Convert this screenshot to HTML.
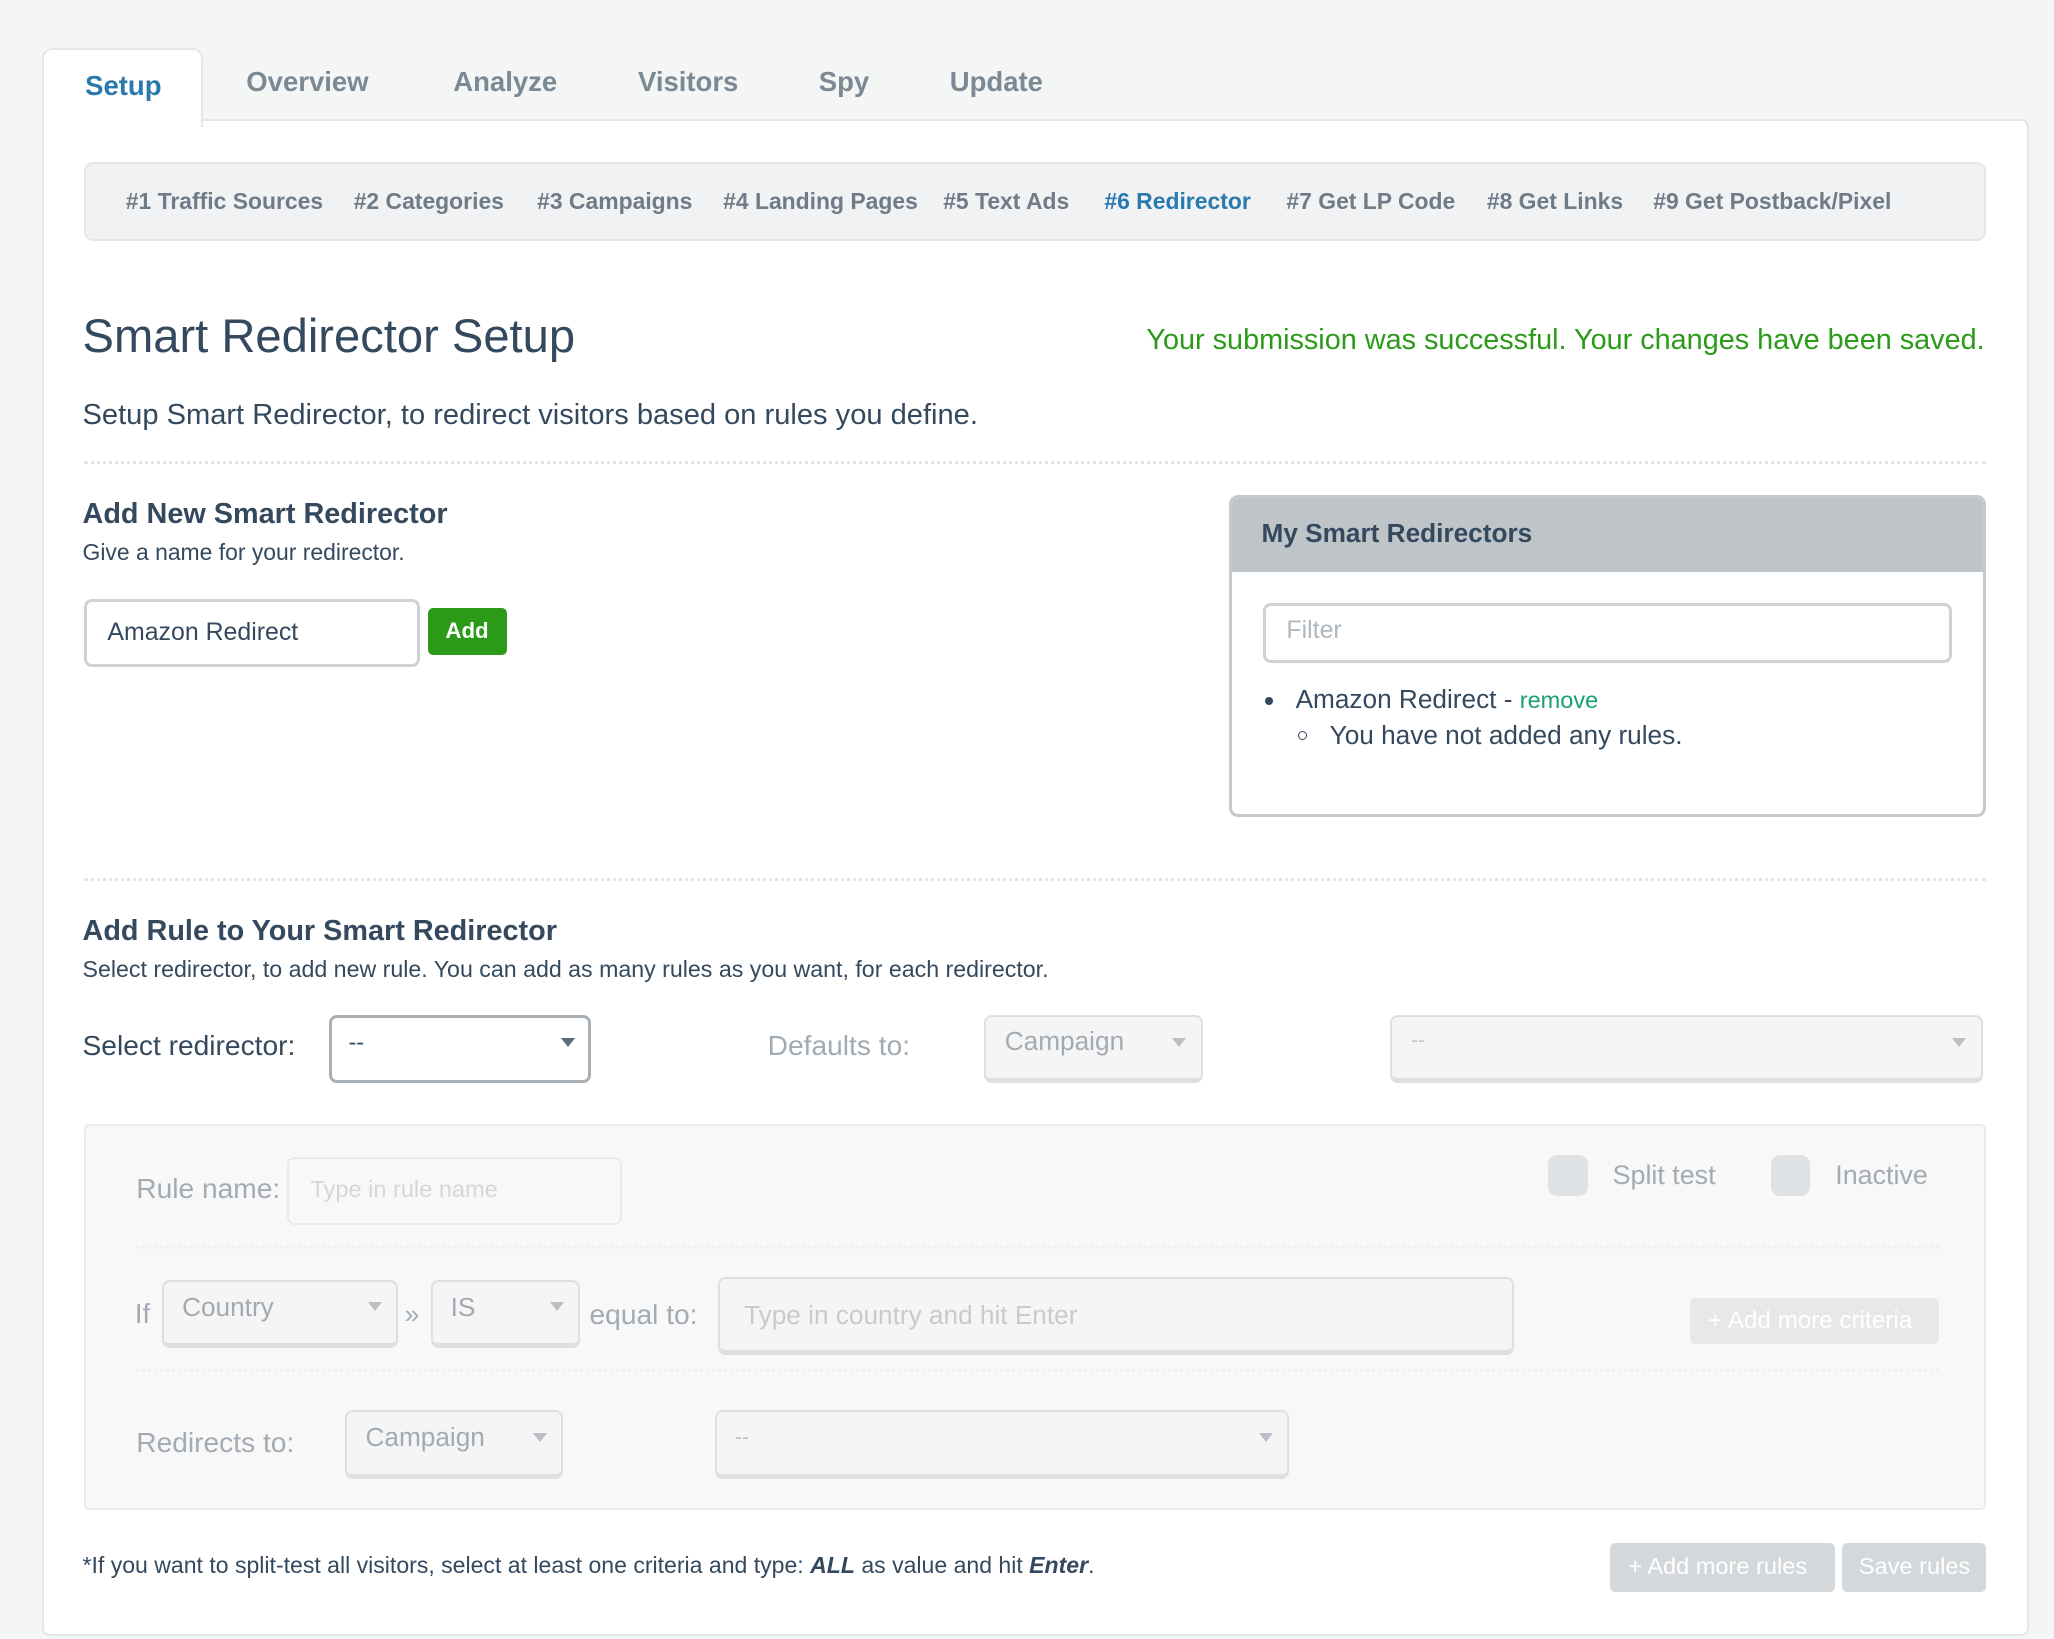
<!DOCTYPE html>
<html><head><meta charset="utf-8"><style>
html,body{margin:0;padding:0;background:#f4f5f5;overflow:hidden}
#w{position:relative;width:1568px;height:1251px;zoom:1.31;font-family:"Liberation Sans",sans-serif;color:#34495e}
.a{position:absolute;white-space:nowrap;line-height:1}
.box{position:absolute;box-sizing:border-box}
.tab{font-weight:bold;font-size:21px;color:#7b8995}
.sub{font-weight:bold;font-size:17.5px;color:#6f7c88;top:145px}
.g{color:#a2abb3}
.sel{position:absolute;box-sizing:border-box;background:#f5f5f5;border:2px solid #dde0e3;border-bottom-width:4px;border-radius:6px}
.arr{position:absolute;width:0;height:0;border-left:6px solid transparent;border-right:6px solid transparent;border-top:7px solid #b9bfc4}
.dot{position:absolute;left:64px;width:1452px;border-top:3px dotted #e3e5e7}
</style></head><body><div id="w">
<div class="box" style="left:32px;top:91px;width:1517px;height:1158px;background:#fff;border:2px solid #e4e6e8;border-radius:6px"></div>
<div class="box" style="left:32px;top:37px;width:123px;height:60px;background:#fff;border:2px solid #e4e6e8;border-bottom:none;border-radius:8px 8px 0 0"></div>
<div class="a" style="left:65px;top:55px;font-size:21px;font-weight:bold;color:#2a7aae">Setup</div>
<div class="a tab" style="left:188px;top:52px">Overview</div>
<div class="a tab" style="left:346px;top:52px">Analyze</div>
<div class="a tab" style="left:487px;top:52px">Visitors</div>
<div class="a tab" style="left:625px;top:52px">Spy</div>
<div class="a tab" style="left:725px;top:52px">Update</div>
<div class="box" style="left:64px;top:124px;width:1452px;height:60px;background:#f1f2f4;border:2px solid #e4e6e8;border-radius:7px"></div>
<div class="a sub" style="left:96px">#1 Traffic Sources</div>
<div class="a sub" style="left:270px">#2 Categories</div>
<div class="a sub" style="left:410px">#3 Campaigns</div>
<div class="a sub" style="left:552px">#4 Landing Pages</div>
<div class="a sub" style="left:720px">#5 Text Ads</div>
<div class="a sub" style="left:843px;color:#2a7aae">#6 Redirector</div>
<div class="a sub" style="left:982px">#7 Get LP Code</div>
<div class="a sub" style="left:1135px">#8 Get Links</div>
<div class="a sub" style="left:1262px">#9 Get Postback/Pixel</div>
<div class="a" style="left:63px;top:238px;font-size:36px">Smart Redirector Setup</div>
<div class="a" style="right:53px;top:249px;font-size:22px;color:#2a9a18">Your submission was successful. Your changes have been saved.</div>
<div class="a" style="left:63px;top:306px;font-size:22.2px">Setup Smart Redirector, to redirect visitors based on rules you define.</div>
<div class="dot" style="top:352px"></div>
<div class="a" style="left:63px;top:382px;font-size:22px;font-weight:bold">Add New Smart Redirector</div>
<div class="a" style="left:63px;top:413px;font-size:17.5px">Give a name for your redirector.</div>
<div class="box" style="left:64px;top:457px;width:257px;height:52px;border:3px solid #cfd3d7;border-radius:6px"></div>
<div class="a" style="left:82px;top:473px;font-size:19px">Amazon Redirect</div>
<div class="box" style="left:327px;top:464px;width:60px;height:36px;background:#2a9a18;border-radius:4px"></div>
<div class="a" style="left:340px;top:473px;font-size:17px;font-weight:bold;color:#fff">Add</div>
<div class="box" style="left:938px;top:378px;width:578px;height:246px;border:3px solid #c4c9cd;border-radius:7px;background:#fff;overflow:hidden"><div style="height:56px;background:#bfc4c8"></div></div>
<div class="a" style="left:963px;top:397px;font-size:20px;font-weight:bold">My Smart Redirectors</div>
<div class="box" style="left:964px;top:460px;width:526px;height:46px;border:3px solid #cfd3d7;border-radius:6px"></div>
<div class="a" style="left:982px;top:472px;font-size:19px;color:#b0b7bd">Filter</div>
<div class="box" style="left:966px;top:532px;width:6px;height:6px;border-radius:50%;background:#34495e"></div>
<div class="a" style="left:989px;top:524px;font-size:20px">Amazon Redirect - <span style="color:#1a9e74;font-size:18px">remove</span></div>
<div class="box" style="left:991px;top:558px;width:7px;height:7px;border-radius:50%;border:1.5px solid #34495e"></div>
<div class="a" style="left:1015px;top:551px;font-size:20px">You have not added any rules.</div>
<div class="dot" style="top:670px"></div>
<div class="a" style="left:63px;top:700px;font-size:22px;font-weight:bold">Add Rule to Your Smart Redirector</div>
<div class="a" style="left:63px;top:731px;font-size:17.7px">Select redirector, to add new rule. You can add as many rules as you want, for each redirector.</div>
<div class="a" style="left:63px;top:788px;font-size:21.5px">Select redirector:</div>
<div class="box" style="left:251px;top:775px;width:200px;height:52px;border:3px solid #a8afb5;border-radius:6px;background:#fff"></div>
<div class="a" style="left:266px;top:787px;font-size:18px">--</div>
<div class="arr" style="left:428px;top:792px;border-top-color:#5d6a75"></div>
<div class="a g" style="left:586px;top:788px;font-size:21.5px">Defaults to:</div>
<div class="sel" style="left:751px;top:775px;width:167px;height:52px"></div>
<div class="a g" style="left:767px;top:785px;font-size:20px">Campaign</div>
<div class="arr" style="left:895px;top:792px"></div>
<div class="sel" style="left:1061px;top:775px;width:453px;height:52px"></div>
<div class="a" style="left:1077px;top:787px;font-size:16px;color:#c6cbd0">--</div>
<div class="arr" style="left:1490px;top:792px"></div>
<div class="box" style="left:64px;top:858px;width:1452px;height:295px;background:#f8f8f8;border:2px solid #eaebec;border-radius:4px"></div>
<div class="a g" style="left:104px;top:897px;font-size:21.5px">Rule name:</div>
<div class="box" style="left:219px;top:883px;width:256px;height:52px;border:2px solid #e8eaec;border-radius:6px;background:#f8f8f8"></div>
<div class="a" style="left:237px;top:899px;font-size:18px;color:#d3d7db">Type in rule name</div>
<div class="box" style="left:1182px;top:882px;width:30px;height:31px;background:#dfe2e5;border-radius:7px"></div>
<div class="a g" style="left:1231px;top:887px;font-size:20.5px">Split test</div>
<div class="box" style="left:1352px;top:882px;width:30px;height:31px;background:#dfe2e5;border-radius:7px"></div>
<div class="a g" style="left:1401px;top:887px;font-size:20.5px">Inactive</div>
<div class="dot" style="left:104px;width:1376px;top:951px;border-top-color:#eef0f1"></div>
<div class="a g" style="left:103px;top:992px;font-size:21px">If</div>
<div class="sel" style="left:124px;top:977px;width:180px;height:52px"></div>
<div class="a g" style="left:139px;top:988px;font-size:20px">Country</div>
<div class="arr" style="left:281px;top:994px"></div>
<div class="a g" style="left:309px;top:993px;font-size:20px">»</div>
<div class="sel" style="left:329px;top:977px;width:114px;height:52px"></div>
<div class="a g" style="left:344px;top:988px;font-size:20px">IS</div>
<div class="arr" style="left:420px;top:994px"></div>
<div class="a g" style="left:450px;top:993px;font-size:21.5px">equal to:</div>
<div class="sel" style="left:548px;top:975px;width:608px;height:59px"></div>
<div class="a" style="left:568px;top:994px;font-size:20px;color:#c6cbd0">Type in country and hit Enter</div>
<div class="box" style="left:1290px;top:991px;width:190px;height:35px;background:#e6e8ea;border-radius:4px"></div>
<div class="a" style="left:1304px;top:999px;font-size:18.5px;color:#fff">+ Add more criteria</div>
<div class="dot" style="left:104px;width:1376px;top:1045px;border-top-color:#eef0f1"></div>
<div class="a g" style="left:104px;top:1091px;font-size:21.5px">Redirects to:</div>
<div class="sel" style="left:263px;top:1076px;width:167px;height:53px"></div>
<div class="a g" style="left:279px;top:1087px;font-size:20px">Campaign</div>
<div class="arr" style="left:407px;top:1094px"></div>
<div class="sel" style="left:546px;top:1076px;width:438px;height:53px"></div>
<div class="a" style="left:561px;top:1090px;font-size:16px;color:#b8bec3">--</div>
<div class="arr" style="left:961px;top:1094px"></div>
<div class="a" style="left:63px;top:1186px;font-size:17.6px">*If you want to split-test all visitors, select at least one criteria and type: <b><i>ALL</i></b> as value and hit <b><i>Enter</i></b>.</div>
<div class="box" style="left:1229px;top:1178px;width:172px;height:37px;background:#d4d8db;border-radius:4px"></div>
<div class="a" style="left:1243px;top:1187px;font-size:18px;color:#fff">+ Add more rules</div>
<div class="box" style="left:1406px;top:1178px;width:110px;height:37px;background:#d4d8db;border-radius:4px"></div>
<div class="a" style="left:1419px;top:1187px;font-size:18px;color:#fff">Save rules</div>
</div></body></html>
